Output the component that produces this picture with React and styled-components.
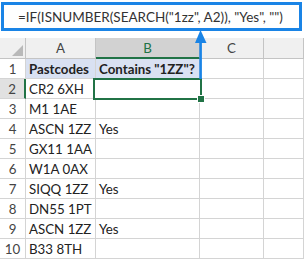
import React from 'react';
import styled, { createGlobalStyle } from 'styled-components';

const GlobalStyle = createGlobalStyle`
  html, body {
    margin: 0;
    padding: 0;
    background: #fff;
  }
  body {
    font-family: Lato, "Open Sans", "Liberation Sans", sans-serif;
  }
`;

const GREEN = '#217346';
const BLUE = '#1a84e6';
const GRID = '#d4d4d4';

const Sheet = styled.div`
  position: relative;
  width: 304px;
  height: 259px;
  overflow: hidden;
  background: #fff;
`;

const FormulaBox = styled.div`
  box-sizing: border-box;
  margin: 2px 2px 0 1px;
  height: 29px;
  border: 3px solid ${BLUE};
  padding-left: 14px;
  display: flex;
  align-items: center;
  font-size: 13.5px;
  color: #333;
  white-space: nowrap;
`;

const Grid = styled.div`
  margin-top: 7px;
  display: grid;
  grid-template-columns: 26px 70px 104px 64px 1fr;
  grid-template-rows: 21px repeat(10, 20px);
`;

const Cell = styled.div`
  box-sizing: border-box;
  border-right: 1px solid ${GRID};
  border-bottom: 1px solid ${GRID};
  padding-left: 3px;
  display: flex;
  align-items: center;
  font-size: 13.3px;
  color: #222;
  white-space: nowrap;
  overflow: visible;
  background: ${(p) => (p.$fill ? '#d9e1f2' : '#fff')};
  font-weight: ${(p) => (p.$bold ? 700 : 400)};
`;

const ColHead = styled.div`
  box-sizing: border-box;
  display: flex;
  align-items: center;
  justify-content: center;
  font-size: 13.3px;
  background: ${(p) => (p.$active ? '#d2d2d2' : '#f0f0f0')};
  color: ${(p) => (p.$active ? GREEN : '#444')};
  border-right: 1px solid #c4c4c4;
  border-bottom: ${(p) => (p.$active ? `2px solid ${GREEN}` : '1px solid #c4c4c4')};
`;

const Corner = styled.div`
  position: relative;
  box-sizing: border-box;
  background: #f0f0f0;
  border-right: 1px solid #c4c4c4;
  border-bottom: 1px solid #c4c4c4;
  &::after {
    content: '';
    position: absolute;
    right: 2px;
    bottom: 2px;
    border-left: 11px solid transparent;
    border-bottom: 11px solid #b9b9b9;
  }
`;

const RowHead = styled.div`
  box-sizing: border-box;
  display: flex;
  align-items: center;
  justify-content: center;
  font-size: 13.3px;
  color: #444;
  background: ${(p) => (p.$active ? '#e1e1e1' : '#fff')};
  border-right: ${(p) => (p.$active ? `2px solid ${GREEN}` : `1px solid ${GRID}`)};
  border-bottom: 1px solid ${GRID};
`;

const Selected = styled(Cell)`
  position: relative;
  border: none;
  outline: 2px solid ${GREEN};
  outline-offset: -1px;
  margin: 0 -1px 0 -2px;
  z-index: 1;
  &::after {
    content: '';
    position: absolute;
    right: -4px;
    bottom: -4px;
    width: 6px;
    height: 6px;
    background: ${GREEN};
    border: 1px solid #fff;
  }
`;

const Arrow = styled.svg`
  position: absolute;
  left: 194px;
  top: 29px;
  z-index: 2;
`;

const rows = [
  ['Pastcodes', 'Contains "1ZZ"?'],
  ['CR2 6XH', ''],
  ['M1 1AE', ''],
  ['ASCN 1ZZ', 'Yes'],
  ['GX11 1AA', ''],
  ['W1A 0AX', ''],
  ['SIQQ 1ZZ', 'Yes'],
  ['DN55 1PT', ''],
  ['ASCN 1ZZ', 'Yes'],
  ['B33 8TH', ''],
];

export default function App() {
  return (
    <Sheet>
      <GlobalStyle />
      <FormulaBox>=IF(ISNUMBER(SEARCH("1zz", A2)), "Yes", "")</FormulaBox>
      <Grid>
        <Corner />
        <ColHead>A</ColHead>
        <ColHead $active>B</ColHead>
        <ColHead>C</ColHead>
        <ColHead />
        {rows.map(([a, b], i) => {
          const header = i === 0;
          const sel = i === 1;
          return (
            <React.Fragment key={i}>
              <RowHead $active={sel}>{i + 1}</RowHead>
              <Cell $bold={header} $fill={header}>{a}</Cell>
              {sel ? (
                <Selected />
              ) : (
                <Cell $bold={header} $fill={header}>{b}</Cell>
              )}
              <Cell />
              <Cell />
            </React.Fragment>
          );
        })}
      </Grid>
      <Arrow width="13" height="50" viewBox="0 0 13 50">
        <path d="M6.5 1 L12.5 14 L1 14 Z" fill={BLUE} />
        <rect x="5.3" y="10" width="2.6" height="40" fill={BLUE} />
      </Arrow>
    </Sheet>
  );
}
